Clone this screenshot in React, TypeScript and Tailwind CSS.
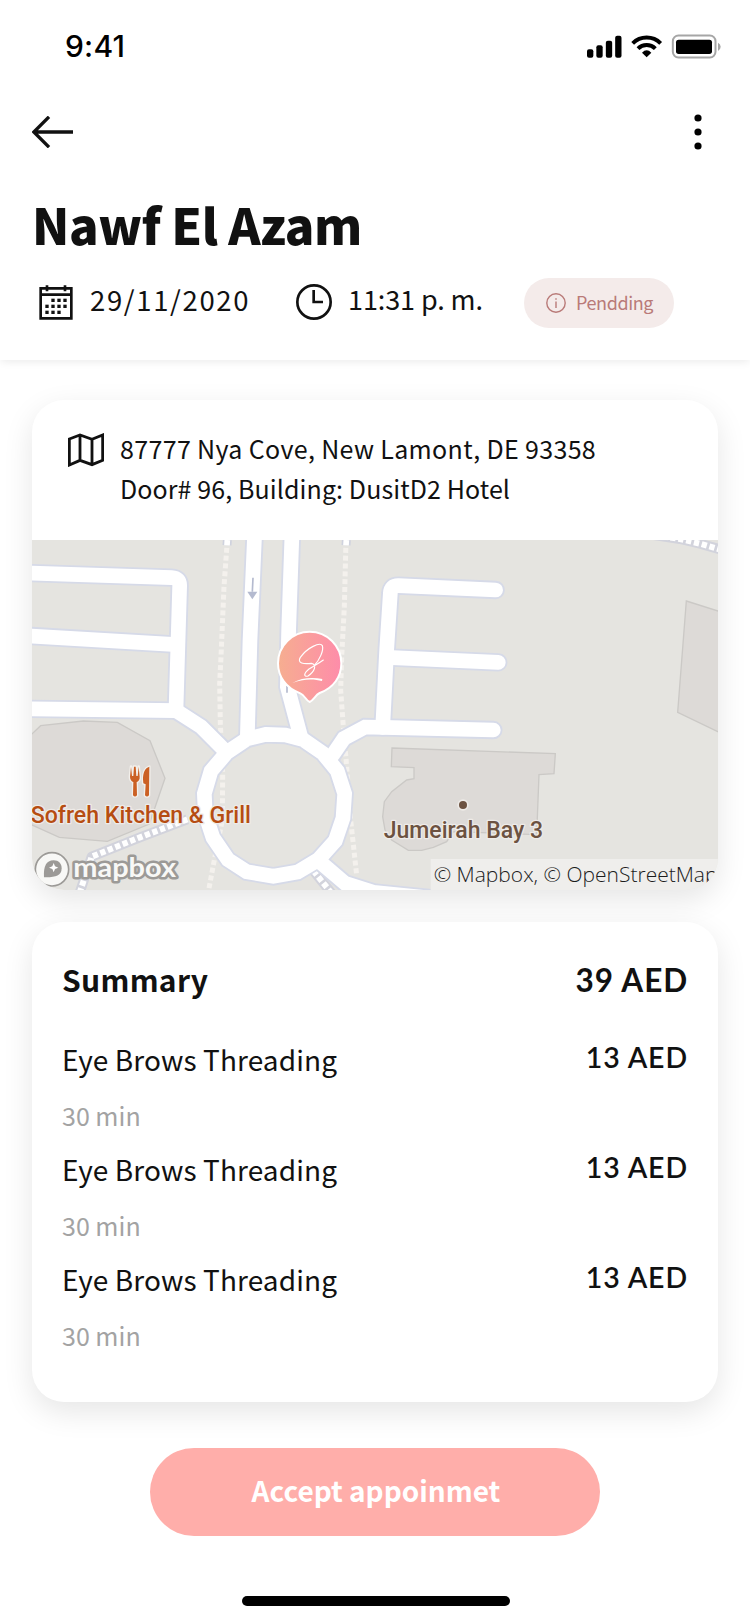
const services = [
  { name: "Eye Brows Threading", duration: "30 min", price: "13 AED" },
  { name: "Eye Brows Threading", duration: "30 min", price: "13 AED" },
  { name: "Eye Brows Threading", duration: "30 min", price: "13 AED" },
];

const roads = [
  "M60 -202L515 -187Q540 -186 539 -162L528 208",
  "M60 -14L530 14",
  "M60 206L528 212L603 260L668 325",
  "M764 -320L750 0L742 290",
  "M876 -320L866 -30L862 140L902 290",
  "M1148 262L1160 30L1171 -140Q1172 -164 1196 -163L1487 -150",
  "M1160 52L1495 67",
  "M1480 270L1148 262L1095 261L1032 295L998 345",
  "M965 670L1035 730L1120 757L1300 775",
  "M797 283L856 285L910 299L969 340L1012 393L1034 461L1029 534L1006 602L955 659L893 696L820 709L740 695L684 659L639 593L616 523L613 461L633 393L681 337L741 297Z",
];

const footways = [
  "M682 -300L672 -160L663 50L659 130L661 250L668 400L667 540L643 660L626 750",
  "M1038 -300L1033 -100L1025 50L1022 150L1030 260L1040 380L1052 540L1070 705",
];

const steps = [
  "M562 538L420 592L275 650L240 755",
  "M940 692L995 760",
  "M1940 -318L2040 -303L2100 -289L2170 -269",
];

function StatusIcons() {
  return (
    <svg className="h-[25px] w-[138px]" viewBox="630 100 414 75" fill="none">
      <g fill="#000">
        <rect x="636" y="146" width="19" height="25" rx="6" />
        <rect x="664" y="134" width="19" height="37" rx="6" />
        <rect x="692.500" y="120" width="19" height="51" rx="6" />
        <rect x="720.500" y="105" width="19" height="66" rx="6" />
        <path d="M815 170L801 156Q815 142 829 156Z" />
      </g>
      <path d="M773 128A60 60 0 0 1 857 128M789 144A37 37 0 0 1 841 144" stroke="#000" strokeWidth="12" />
      <rect x="893.500" y="104.500" width="128" height="66" rx="17" stroke="#a6a6a6" strokeWidth="6" />
      <rect x="903" y="117" width="108" height="43" rx="8" fill="#000" />
      <path d="M1029 126Q1037 130 1037 138T1029 151Z" fill="#a6a6a6" />
    </svg>
  );
}

function CalendarIcon() {
  const dots = [[159, 331], [177, 331], [195, 331], [141, 349], [159, 349], [177, 349], [195, 349], [141, 367], [159, 367], [177, 367]];
  return (
    <svg className="mt-[7px] h-[35px] w-[34px]" viewBox="117 285 102 105" fill="none" stroke="#111" strokeWidth="8">
      <path d="M122 295H214V385H122ZM122 314H214M141 286V304M195 286V304" />
      {dots.map(([x, y]) => (
        <rect key={`${x}-${y}`} x={x - 5} y={y - 5} width="10" height="10" fill="#111" stroke="none" />
      ))}
    </svg>
  );
}

function ClockIcon() {
  return (
    <svg className="mt-[6px] h-9 w-9" viewBox="0 0 108 108" fill="none" stroke="#111" strokeWidth="8">
      <circle cx="54" cy="54" r="50" />
      <path d="M53 18V54H81" />
    </svg>
  );
}

function MapIcon() {
  return (
    <svg className="mt-[6px] h-[34px] w-9" viewBox="204 129 108 102" fill="none" stroke="#111" strokeWidth="8.500">
      <path d="M208 147L240 135L276 148L308 135V211L276 224L240 211L208 225ZM240 135V211M276 148V224" />
    </svg>
  );
}

function LocationMap() {
  return (
    <svg className="block h-[350px] w-[686px]" viewBox="96 -300 2058 1050" fill="none">
      <defs>
        <linearGradient id="pin" x1="0" y1="0" x2="1" y2="0">
          <stop offset="0" stopColor="#f6ae90" />
          <stop offset="1" stopColor="#fe8caa" />
        </linearGradient>
      </defs>
      <rect x="96" y="-300" width="2058" height="1050" fill="#e5e4e0" />
      <g fill="#dddad7" stroke="#cbc9c6" strokeWidth="4">
        <path d="M70 306L122 257L250 243L352 247L450 302L495 415L448 552L322 604L178 592L70 543Z" />
        <path d="M2170 -82L2059 -117L2033 217L2170 283Z" />
        <path d="M1176 324L1666 341L1662 401L1617 404L1610 584L1360 575L1340 605L1300 622L1265 631L1225 631L1175 600L1155 570L1148 530L1153 485L1175 455L1220 420L1242 416V383L1174 380Z" />
      </g>
      <g stroke="#f4f1ed" strokeWidth="15" strokeDasharray="15 8.500">
        {footways.map((d) => <path key={d} d={d} />)}
      </g>
      <path d="M682 -300L681 -284M1039 -300L1038 -284" stroke="#cfd2de" strokeWidth="27" />
      <path d="M682 -300L681 -284M1039 -300L1038 -284" stroke="#fff" strokeWidth="17" />
      <g stroke="#d2d3dc" strokeWidth="30" strokeLinejoin="round">
        {steps.map((d) => <path key={d} d={d} />)}
      </g>
      <g stroke="#fff" strokeWidth="18" strokeDasharray="16 8">
        {steps.map((d) => <path key={d} d={d} />)}
      </g>
      <g stroke="#d6dae8" strokeWidth="55" strokeLinecap="round">
        {roads.map((d) => <path key={d} d={d} />)}
      </g>
      <g stroke="#fff" strokeWidth="44" strokeLinecap="round">
        {roads.map((d) => <path key={d} d={d} />)}
      </g>
      <path d="M759 -187L757 -145M861 138V158" stroke="#b4bacf" strokeWidth="5" />
      <path d="M742 -145H772L757 -122Z" fill="#b4bacf" />

      <g transform="translate(810 -45)">
        <path d="M119 231C108 227 104 210 91 205C48 190 24 155 24 115A95 95 0 0 1 214 115C214 155 191 189 149 204C136 210 130 227 119 231Z" fill="url(#pin)" stroke="#fff" strokeWidth="6" />
        <path d="M133 121C148 106 162 76 157 62C150 50 112 68 91 97C80 115 102 118 124 115C142 119 134 140 114 153C100 157 101 145 117 132C133 122 145 116 160 105" stroke="#fff" strokeWidth="3.500" strokeLinecap="round" />
        <path d="M67 174C95 157 130 157 157 162L156 168C130 160 95 162 67 174Z" fill="#fff" />
      </g>

      <g transform="translate(96 360)" fill="#cb6024" stroke="#f2efeb" strokeWidth="8" strokeLinejoin="round" style={{ paintOrder: "stroke" }}>
        <path d="M297 20L294 50C294 59 299 64 304 66L303 106Q309 113 315 106L314 66C319 64 324 59 323 50L320 20L317 48H313L311 20H306L304 48H300Z" />
        <path d="M352 20C339 24 333 38 333 58L334 70L341 73L339 106Q345 113 351 106Z" />
      </g>
      <g fontFamily="Roboto, sans-serif" fontWeight="500" strokeLinejoin="round" strokeWidth="8" stroke="#eeebe8" style={{ paintOrder: "stroke" }}>
        <text x="92" y="548" fontSize="70" fill="#b64d12" textLength="661" lengthAdjust="spacingAndGlyphs">Sofreh Kitchen &amp; Grill</text>
        <text x="1151" y="593" fontSize="70" fill="#6c5241" textLength="478" lengthAdjust="spacingAndGlyphs">Jumeirah Bay 3</text>
        <circle cx="1389" cy="495" r="12" fill="#6c5241" strokeWidth="10" />
      </g>

      <g transform="translate(96 360)">
        <circle cx="60" cy="328" r="50" fill="#f8f8f6" stroke="#9c9a97" strokeWidth="5" />
        <path d="M36 352C34 320 42 301 65 301C80 301 89 311 89 325C89 348 68 353 36 352Z" fill="#9c9a97" />
        <path d="M65 309L69 319L79 323L69 327L65 337L61 327L51 323L61 319Z" fill="#fff" />
        <text x="124" y="350" fontFamily="Lato, sans-serif" fontWeight="700" fontSize="79" fill="#f8f8f6" stroke="#9c9a97" strokeWidth="15" strokeLinejoin="round" textLength="308" lengthAdjust="spacingAndGlyphs" style={{ paintOrder: "stroke" }}>mapbox</text>
      </g>

      <rect x="1292" y="657" width="862" height="93" fill="#efeeec" />
      <text x="1301" y="727" fontFamily="Open Sans, sans-serif" fontWeight="300" fontSize="63" fill="#1c1c1c">© Mapbox, © OpenStreetMap</text>
    </svg>
  );
}

export default function App() {
  return (
    <div className="flex h-[1624px] w-[750px] flex-col bg-white font-['Noto_Sans_CJK_SC',sans-serif] text-[#111]">
      <header className="h-[360px] shrink-0 bg-white shadow-[0_3px_8px_-1px_rgba(0,0,0,0.08)]">
        <div className="flex h-[92px] items-center justify-between pr-[27px] pl-[65px]">
          <span className="font-['Inter',sans-serif] text-[30px] leading-[36px] font-medium tracking-[0.2px] text-black">9:41</span>
          <StatusIcons />
        </div>
        <div className="flex h-20 items-center justify-between pr-[46px] pl-8">
          <svg className="h-8 w-[41px]" viewBox="96 348 123 96" fill="none" stroke="#111" strokeWidth="10">
            <path d="M219 396H102M147 350.500L101.500 396L147 441.500" />
          </svg>
          <svg className="h-9 w-3" viewBox="0 0 12 36" fill="#000">
            <circle cx="6" cy="4" r="3.600" />
            <circle cx="6" cy="18" r="3.600" />
            <circle cx="6" cy="32" r="3.600" />
          </svg>
        </div>
        <h1 className="mt-[22px] pl-[32px] text-[49px] leading-[60px] font-black tracking-[-0.5px]">Nawf El Azam</h1>
        <div className="mt-[24px] flex h-[50px] items-start pr-[76px] pl-[39px]">
          <CalendarIcon />
          <span className="ml-[17px] w-[206px] pt-px text-[27.500px] leading-10 tracking-[1.650px]">29/11/2020</span>
          <ClockIcon />
          <span className="ml-4 pt-px text-[27px] leading-10 tracking-[-0.1px]">11:31 p. m.</span>
          <div className="ml-auto flex h-[50px] w-[150px] items-center rounded-full bg-[#f4ebea] pl-[22px] text-[#b97a78]">
            <svg className="h-5 w-5" viewBox="0 0 20 20" fill="none" stroke="currentColor" strokeWidth="1.400">
              <circle cx="10" cy="10" r="9.200" />
              <path d="M10 8.500V15M10 5.200V6.800" />
            </svg>
            <span className="ml-[10px] pb-[2px] text-[18px] leading-6 tracking-[-0.4px]">Pendding</span>
          </div>
        </div>
      </header>

      <main className="flex flex-col items-center">
        <section className="mt-10 h-[490px] w-[686px] overflow-hidden rounded-[32px] bg-white shadow-[0_10px_30px_rgba(0,0,0,0.1)]">
          <div className="flex h-[140px] items-start pt-[27px] pl-9">
            <MapIcon />
            <p className="ml-4 pt-px text-[25px] leading-10">
              <span className="block tracking-[0.350px]">87777 Nya Cove, New Lamont, DE 93358</span>
              <span className="block tracking-[0.100px]">Door# 96, Building: DusitD2 Hotel</span>
            </p>
          </div>
          <LocationMap />
        </section>

        <section className="mt-8 h-[480px] w-[686px] rounded-[32px] bg-white pt-9 pr-[30px] pl-[30px] shadow-[0_10px_30px_rgba(0,0,0,0.1)]">
          <div className="flex h-[41px] justify-between leading-[41px] font-bold">
            <h2 className="pt-px text-[30px] tracking-[0.3px]">Summary</h2>
            <span className="pt-[2px] font-['Lato',sans-serif] text-[31.500px] tracking-[0.9px]">39 AED</span>
          </div>
          <ul className="mt-[39px]">
            {services.map((service, i) => (
              <li key={i} className="flex h-[110px] justify-between">
                <div className="leading-10">
                  <p className="pt-px text-[28px] tracking-[0.100px]">{service.name}</p>
                  <p className="mt-[16px] text-[25px] text-[#a3a3a3]">{service.duration}</p>
                </div>
                <span className="font-['Lato',sans-serif] text-[28.500px] leading-[39px] font-semibold tracking-[0.9px]">{service.price}</span>
              </li>
            ))}
          </ul>
        </section>

        <button className="mt-[46px] h-[88px] w-[450px] rounded-full bg-[#ffaeaa] pb-1 pl-[2px] text-[28px] leading-10 font-bold text-white">
          Accept appoinmet
        </button>
        <div className="mt-[60px] ml-[2px] h-[10px] w-[268px] rounded-full bg-black" />
      </main>
    </div>
  );
}
